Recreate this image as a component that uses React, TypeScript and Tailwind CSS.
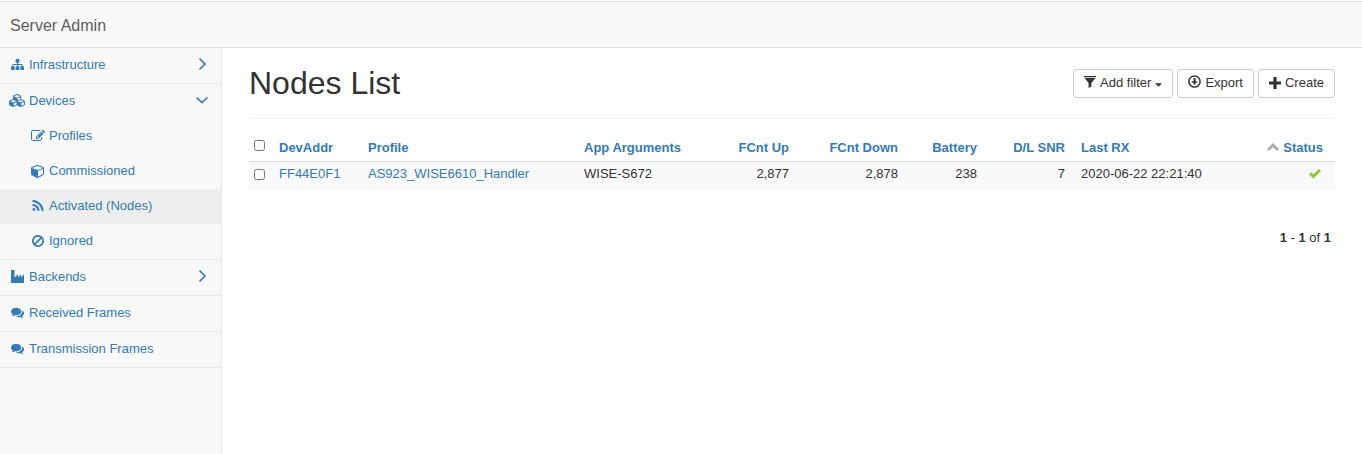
import { useState, type ReactNode } from "react";

type IconProps = { d: string; box?: string; className?: string };

function Icon({ d, box = "0 0 1792 1792", className = "size-[13px]" }: IconProps) {
  return (
    <svg viewBox={box} className={className} fill="currentColor" aria-hidden="true">
      <path d={d} />
    </svg>
  );
}

const ICONS = {
  sitemap:
    "M1792 1248v320q0 40-28 68t-68 28h-320q-40 0-68-28t-28-68v-320q0-40 28-68t68-28h96v-192h-512v192h96q40 0 68 28t28 68v320q0 40-28 68t-68 28h-320q-40 0-68-28t-28-68v-320q0-40 28-68t68-28h96v-192h-512v192h96q40 0 68 28t28 68v320q0 40-28 68t-68 28h-320q-40 0-68-28t-28-68v-320q0-40 28-68t68-28h96v-192q0-52 38-90t90-38h512v-192h-96q-40 0-68-28t-28-68v-320q0-40 28-68t68-28h320q40 0 68 28t28 68v320q0 40-28 68t-68 28h-96v192h512q52 0 90 38t38 90v192h96q40 0 68 28t28 68z",
  cubes:
    "M640 1632l384-192v-314l-384 164v342zm-64-454l404-173-404-173-404 173zm1088 454l384-192v-314l-384 164v342zm-64-454l404-173-404-173-404 173zm-448-293l384-165v-266l-384 164v267zm-64-379l441-189-441-189-441 189zm1088 518v416q0 36-19 67t-52 47l-448 224q-25 14-57 14t-57-14l-448-224q-4-2-7-4-2 2-7 4l-448 224q-25 14-57 14t-57-14l-448-224q-33-16-52-47t-19-67v-416q0-38 21.5-70t56.5-48l434-186v-400q0-38 21.5-70t56.5-48l448-192q23-10 50-10t50 10l448 192q35 16 56.5 48t21.5 70v400l434 186q36 16 57 48t21 70z",
  edit: "M888 1184l116-116-152-152-116 116v56h96v96h56zm440-720q-16-16-33 1l-350 350q-17 17-1 33t33-1l350-350q17-17 1-33zm80 594v190q0 119-84.5 203.5t-203.5 84.5h-832q-119 0-203.5-84.5t-84.5-203.5v-832q0-119 84.5-203.5t203.5-84.5h832q63 0 117 25 15 7 18 23 3 17-9 29l-49 49q-14 14-32 8-23-6-45-6h-832q-66 0-113 47t-47 113v832q0 66 47 113t113 47h832q66 0 113-47t47-113v-126q0-13 9-22l64-64q15-15 35-7t20 29zm-96-738l288 288-672 672h-288v-288zm444 132l-92 92-288-288 92-92q28-28 68-28t68 28l152 152q28 28 28 68t-28 68z",
  cube: "M896 1629l640-349v-636l-640 233v752zm-64-865l698-254-698-254-698 254zm832-252v768q0 35-18 65t-49 47l-704 384q-28 16-61 16t-61-16l-704-384q-31-17-49-47t-18-65v-768q0-40 23-73t61-47l704-256q22-8 44-8t44 8l704 256q38 14 61 47t23 73z",
  rss: "M576 1344q0 80-56 136t-136 56-136-56-56-136 56-136 136-56 136 56 56 136zm512 123q2 28-17 48-18 21-47 21h-135q-25 0-43-16.5t-20-41.5q-22-229-184.5-391.5t-391.5-184.5q-25-2-41.5-20t-16.5-43v-135q0-29 21-47 17-17 43-17h5q160 13 306 80.5t259 181.5q114 113 181.5 259t80.5 306zm512 2q2 27-18 47-18 20-46 20h-143q-26 0-44.5-17.5t-19.5-42.5q-12-215-101-408.5t-231.5-336-336-231.5-408.5-102q-25-1-42.5-19.5t-17.5-43.5v-143q0-28 20-46 18-18 44-18h3q262 13 501.5 120t425.5 294q187 186 294 425.5t120 501.5z",
  ban: "M1440 893q0-161-87-295l-754 753q137 89 297 89 111 0 211.5-43.5t173.5-116.5 116-174.5 43-212.5zm-999 299l755-754q-135-91-300-91-148 0-273 73t-198 199-73 274q0 162 89 299zm1223-299q0 157-61 300t-163.5 246-245 164-298.5 61-298.5-61-245-164-163.5-246-61-300 61-299.5 163.5-245.5 245-164 298.5-61 298.5 61 245 164 163.5 245.5 61 299.5z",
  industry: "M0 0h3.5v7.5L7 4.2v3.3l3-3.3v3.3l3-3.3V13H0z",
  comments:
    "M1408 768q0 139-94 257t-256.5 186.5-353.5 68.5q-86 0-176-16-124 88-278 128-36 9-86 16h-3q-11 0-20.5-8t-11.5-21q-1-3-1-6.5t.5-6.5 2-6l2.5-5 3.5-5.5 4-5 4.5-5 4-4.5q5-6 23-25t26-29.5 22.5-29 25-38.5 20.5-44q-124-72-195-177t-71-224q0-139 94-257t256.5-186.5 353.5-68.5 353.5 68.5 256.5 186.5 94 257zm384 256q0 120-71 224.5t-195 176.5q10 24 20.5 44t25 38.5 22.5 29 26 29.5 23 25q1 1 4 4.5t4.5 5 4 5 3.5 5.5l2.5 5 2 6 .5 6.5-1 6.5q-3 14-13 22t-22 7q-50-7-86-16-154-40-278-128-90 16-176 16-271 0-472-132 58 4 88 4 161 0 309-45t264-129q125-92 192-212t67-254q0-77-23-152 129 71 204 178t75 230z",
  filter: "M0 0h12v1.2H0zM.6 2h10.8L7.4 7v3.5L4.6 12V7z",
  plus: "M4.4 0h3.2v4.4H12v3.2H7.6V12H4.4V7.6H0V4.4h4.4z",
  check: "M0 5.2L2 3.2l2.4 2.3L9.9 0 12 2 4.4 9.6z",
  sortUp: "M6 0l6 6-2 2-4-4-4 4-2-2z",
};

function Chevron({ open }: { open: boolean }) {
  return (
    <svg viewBox="0 0 14 14" className="mb-1 size-[14px]" fill="none" stroke="currentColor" strokeWidth="1.7" aria-hidden="true">
      <path d={open ? "M1.5 4.5L7 9.7l5.5-5.2" : "M4.5 1.5L10 7l-5.5 5.5"} />
    </svg>
  );
}

function MenuLink({ icon, label, chevron }: { icon: ReactNode; label: string; chevron?: "open" | "closed" }) {
  return (
    <a href="#" className="flex h-[35px] items-center pr-3 pl-[9px]">
      <span className="flex w-[17px] justify-center pb-0.5">{icon}</span>
      <span className="ml-[3px] grow pb-0.5">{label}</span>
      {chevron && <Chevron open={chevron === "open"} />}
    </a>
  );
}

const SUB_ITEMS = [
  { icon: ICONS.edit, label: "Profiles" },
  { icon: ICONS.cube, label: "Commissioned" },
  { icon: ICONS.rss, label: "Activated (Nodes)", active: true },
  { icon: ICONS.ban, label: "Ignored" },
];

function Sidebar() {
  return (
    <nav className="w-[222px] shrink-0 border-r border-[#e7e7e7] bg-[#f8f8f8] text-[#337ab7]">
      <ul className="[&>li]:border-b [&>li]:border-[#e7e7e7]">
        <li>
          <MenuLink icon={<Icon d={ICONS.sitemap} />} label="Infrastructure" chevron="closed" />
        </li>
        <li>
          <MenuLink
            icon={<Icon d={ICONS.cubes} box="0 0 2304 1792" className="h-[13px] w-[17px]" />}
            label="Devices"
            chevron="open"
          />
          <ul>
            {SUB_ITEMS.map((item) => (
              <li key={item.label}>
                <a
                  href="#"
                  aria-current={item.active ? "page" : undefined}
                  className={`flex h-[35px] items-center gap-1 pb-0.5 pl-[31px] ${item.active ? "bg-[#eeeeee]" : ""}`}
                >
                  <Icon d={item.icon} className="size-[14px]" />
                  {item.label}
                </a>
              </li>
            ))}
          </ul>
        </li>
        <li>
          <MenuLink icon={<Icon d={ICONS.industry} box="0 0 13 13" />} label="Backends" chevron="closed" />
        </li>
        <li>
          <MenuLink icon={<Icon d={ICONS.comments} />} label="Received Frames" />
        </li>
        <li>
          <MenuLink icon={<Icon d={ICONS.comments} />} label="Transmission Frames" />
        </li>
      </ul>
    </nav>
  );
}

function ToolButton({ children }: { children: ReactNode }) {
  return (
    <button
      type="button"
      className="flex h-[29px] items-center gap-1 rounded-[3px] border border-[#cccccc] bg-white px-[10px] pb-0.5 whitespace-nowrap text-[#333333]"
    >
      {children}
    </button>
  );
}

function HeadCell({ label, right }: { label: string; right?: boolean }) {
  return (
    <th scope="col" className={`px-2 pt-0.5 font-bold ${right ? "text-right" : "text-left"}`}>
      <a href="#" className="text-[#337ab7]">
        {label}
      </a>
    </th>
  );
}

function NodesTable() {
  const [selected, setSelected] = useState(false);
  const toggle = () => setSelected(!selected);
  return (
    <table className="mt-[14px] w-full table-fixed">
      <colgroup>
        <col className="w-[22px]" />
        <col className="w-[89px]" />
        <col className="w-[216px]" />
        <col className="w-[147px]" />
        <col className="w-[74px]" />
        <col className="w-[109px]" />
        <col className="w-[79px]" />
        <col className="w-[88px]" />
        <col className="w-[175px]" />
        <col className="w-[87px]" />
      </colgroup>
      <thead>
        <tr className="h-[28px] border-b border-[#dddddd] whitespace-nowrap">
          <th scope="col" className="pb-0.5 pl-[5px] text-left">
            <input type="checkbox" aria-label="Select all nodes" checked={selected} onChange={toggle} className="block size-[11px]" />
          </th>
          <HeadCell label="DevAddr" />
          <HeadCell label="Profile" />
          <HeadCell label="App Arguments" />
          <HeadCell label="FCnt Up" right />
          <HeadCell label="FCnt Down" right />
          <HeadCell label="Battery" right />
          <HeadCell label="D/L SNR" right />
          <HeadCell label="Last RX" />
          <th scope="col" aria-sort="ascending" className="pt-0.5 pr-3 font-bold">
            <a href="#" className="flex items-center justify-end gap-1 text-[#337ab7]">
              <Icon d={ICONS.sortUp} box="0 0 12 8" className="mb-0.5 h-2 w-3 text-[#aaaaaa]" />
              Status
            </a>
          </th>
        </tr>
      </thead>
      <tbody>
        <tr className="h-[29px] bg-[#f9f9f9] whitespace-nowrap [&>td]:px-2 [&>td]:pb-1">
          <th scope="row" className="pb-0.5 pl-[5px] text-left">
            <input type="checkbox" aria-label="Select FF44E0F1" checked={selected} onChange={toggle} className="block size-[11px]" />
          </th>
          <td>
            <a href="#" className="text-[#337ab7]">FF44E0F1</a>
          </td>
          <td>
            <a href="#" className="text-[#337ab7]">AS923_WISE6610_Handler</a>
          </td>
          <td>WISE-S672</td>
          <td className="text-right">2,877</td>
          <td className="text-right">2,878</td>
          <td className="text-right">238</td>
          <td className="text-right">7</td>
          <td>2020-06-22 22:21:40</td>
          <td>
            <span role="img" aria-label="OK" className="flex justify-end pr-1.5 text-[#8cc832]">
              <Icon d={ICONS.check} box="0 0 12 10" className="h-[10px] w-3" />
            </span>
          </td>
        </tr>
      </tbody>
    </table>
  );
}

export default function App() {
  return (
    <div className="flex min-h-screen flex-col bg-white font-['Liberation_Sans',Arial,sans-serif] text-[13px] leading-[18px] text-[#333333]">
      <header className="mt-px flex h-[47px] items-center border-y border-[#e0e0e0] bg-[#f8f8f8] px-[10px]">
        <a href="#" className="pt-0.5 text-base text-[#5e5e5e]">
          Server Admin
        </a>
      </header>
      <div className="flex grow">
        <Sidebar />
        <main className="min-w-0 grow px-[27px] pt-[14px]">
          <div className="flex items-start justify-between border-b border-[#eeeeee] pb-[14px]">
            <h1 className="text-[32px] leading-[42px]">Nodes List</h1>
            <div className="flex gap-1 pt-[7px]">
              <ToolButton>
                <Icon d={ICONS.filter} box="0 0 12 12" className="mb-0.5 size-3" />
                Add filter
                <svg viewBox="0 0 8 4" className="mt-1 h-1 w-[7px]" fill="currentColor" aria-hidden="true">
                  <path d="M0 0h8L4 4z" />
                </svg>
              </ToolButton>
              <ToolButton>
                <svg viewBox="0 0 13 13" className="mb-0.5 size-[13px]" aria-hidden="true">
                  <circle cx="6.5" cy="6.5" r="5.6" fill="none" stroke="currentColor" strokeWidth="1.5" />
                  <path d="M5.5 3h2v3.2h2.2L6.5 9.8 3.3 6.2h2.2z" fill="currentColor" />
                </svg>
                Export
              </ToolButton>
              <ToolButton>
                <Icon d={ICONS.plus} box="0 0 12 12" className="size-3" />
                Create
              </ToolButton>
            </div>
          </div>
          <NodesTable />
          <p className="mt-[39px] pr-1 text-right">
            <b>1</b> - <b>1</b> of <b>1</b>
          </p>
        </main>
      </div>
    </div>
  );
}
